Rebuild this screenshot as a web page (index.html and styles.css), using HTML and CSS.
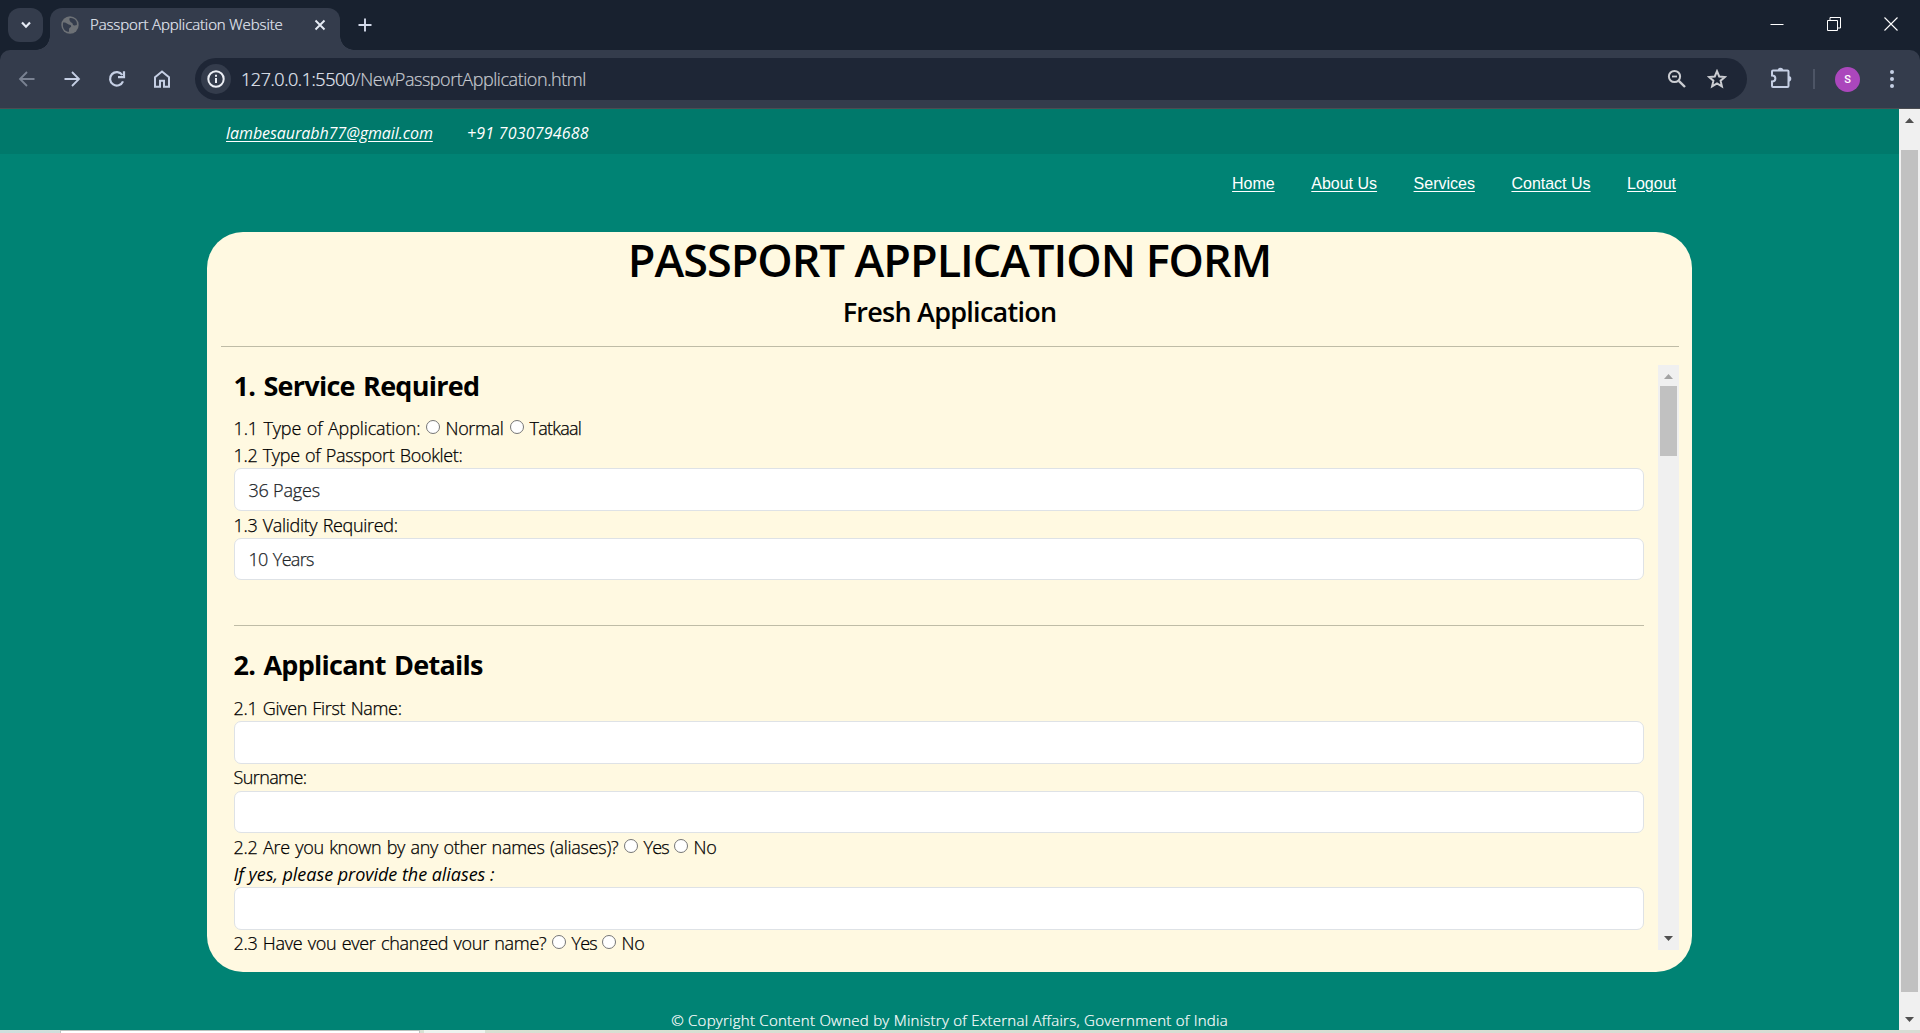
FILE: index.html
```
<!DOCTYPE html>
<html lang="en">
<head>
<meta charset="utf-8">
<title>Passport Application Website</title>
<link rel="stylesheet" href="styles.css">
</head>
<body>
<div class="browser">
  <div class="tabstrip">
    <button class="tab-search" aria-label="Search tabs"><svg width="12" height="12" viewBox="0 0 12 12"><path d="M2 3.5l4 4.2 4-4.2" fill="none" stroke="#e6ebf5" stroke-width="2.2"/></svg></button>
    <div class="tab">
      <svg class="globe" width="18" height="18" viewBox="0 0 18 18"><circle cx="9" cy="9" r="8.7" fill="#6d7176"/><path d="M2 6.500c2-.3 3.500.3 4.800 1.500 1 .9 3.400.6 3.400 2.300 0 1.400-2.200 1.200-2.200 2.800v2.700C4.500 15.800 2 13 1.900 9.500zM8.500 2.200c2.500-.6 5 .5 6.500 2.500 1 1.500 1 3 .8 4.300-1.500.2-2 .8-3.200.3-1.200-.6-.6-1.900-1.800-2.500C9.500 6.200 7.800 4 8.500 2.200z" fill="#343c4c"/></svg>
      <span class="tab-title">Passport Application Website</span>
      <svg class="tab-close" width="12" height="12" viewBox="0 0 12 12"><path d="M1.500 1.500l9 9m0-9l-9 9" stroke="#e6ebf5" stroke-width="1.900"/></svg>
    </div>
    <svg class="new-tab" width="14" height="14" viewBox="0 0 14 14"><path d="M7 .5v13M.5 7h13" stroke="#d3daea" stroke-width="1.900"/></svg>
    <div class="window-controls">
      <svg width="14" height="14" viewBox="0 0 14 14"><path d="M.5 7.500h13" stroke="#fff"/></svg>
      <svg width="14" height="14" viewBox="0 0 14 14"><path d="M.5 3.500h10v10H.5zM3 3V.5h10.500v10.500H11" fill="none" stroke="#fff"/></svg>
      <svg width="14" height="14" viewBox="0 0 14 14"><path d="M.5.5l13 13m0-13l-13 13" stroke="#fff" stroke-width="1.100"/></svg>
    </div>
  </div>
  <div class="toolbar">
    <div class="nav-icons">
      <svg width="18" height="18" viewBox="0 0 18 18"><path d="M16.500 9H2.500M9 2L2 9l7 7" fill="none" stroke="#7a8292" stroke-width="1.800"/></svg>
      <svg width="18" height="18" viewBox="0 0 18 18"><path d="M1.500 9h14M9 2l7 7-7 7" fill="none" stroke="#c5cfe4" stroke-width="1.800"/></svg>
      <svg width="18" height="18" viewBox="0 0 18 18"><path d="M15 11.300A6.700 6.700 0 1 1 14.300 5M16 1.200v6h-6" fill="none" stroke="#c5cfe4" stroke-width="2.200"/></svg>
      <svg width="18" height="18" viewBox="0 0 18 18"><path d="M2 7.200L9 1.500l7 5.700v9.500h-5v-6H7v6H2z" fill="none" stroke="#c5cfe4" stroke-width="2"/></svg>
    </div>
    <div class="omnibox">
      <span class="site-info"><svg width="18" height="18" viewBox="0 0 18 18"><circle cx="9" cy="9" r="7.700" fill="none" stroke="#eceff5" stroke-width="2"/><path d="M9 8v5M9 4.800v2" stroke="#eceff5" stroke-width="2"/></svg></span>
      <span class="url">127.0.0.1:5500<span class="path">/NewPassportApplication.html</span></span>
      <svg class="lens" width="20" height="20" viewBox="0 0 20 20"><circle cx="7.500" cy="7.500" r="5.600" fill="none" stroke="#cbcdd2" stroke-width="2"/><path d="M11.800 11.800l6.200 6.200" stroke="#cbcdd2" stroke-width="2.400"/><path d="M5 7.500h5" stroke="#cbcdd2" stroke-width="1.800"/></svg>
      <svg class="star" width="20" height="20" viewBox="0 0 20 20"><path d="M10 2.200l2.200 5.300 5.700.5-4.300 3.700 1.300 5.600-4.900-3-4.900 3 1.300-5.600L2.100 8l5.700-.5z" fill="none" stroke="#cbcdd2" stroke-width="2"/></svg>
    </div>
    <svg class="extensions" width="22" height="22" viewBox="0 0 22 22"><path d="M2 4.500q0-1 1-1h14.500q1 0 1 1v14.500q0 1-1 1H3q-1 0-1-1v-4.500c4.500 0 4.500-6 0-6z" fill="none" stroke="#c5cfe4" stroke-width="2"/><path d="M7.700 3.500a2.800 2.800 0 0 1 5.600 0zM18.500 9a2.800 2.800 0 0 1 0 5.600z" fill="#c5cfe4"/></svg>
    <span class="divider"></span>
    <span class="avatar">S</span>
    <svg class="menu" width="6" height="20" viewBox="0 0 6 20"><g fill="#c5cfe4"><circle cx="3" cy="3" r="2"/><circle cx="3" cy="10" r="2"/><circle cx="3" cy="17" r="2"/></g></svg>
  </div>

  <div class="viewport">
    <div class="page">
      <header class="topbar">
        <a class="email" href="#">lambesaurabh77@gmail.com</a>
        <span class="phone">+91 7030794688</span>
      </header>
      <nav class="links">
        <a href="#">Home</a><a href="#">About Us</a><a href="#">Services</a><a href="#">Contact Us</a><a href="#">Logout</a>
      </nav>
      <main class="card">
        <h1>PASSPORT APPLICATION FORM</h1>
        <h2>Fresh Application</h2>
        <hr>
        <div class="scroller">
          <form class="form">
            <h3>1. Service Required</h3>
            <div class="row"><span class="t1">1.1 Type of Application:</span><i class="radio"></i><span class="t-normal">Normal</span><i class="radio"></i><span class="t-tatkaal">Tatkaal</span></div>
            <label class="row">1.2 Type of Passport Booklet:</label>
            <div class="control">36 Pages</div>
            <label class="row">1.3 Validity Required:</label>
            <div class="control years">10 Years</div>
            <hr class="section-rule">
            <h3>2. Applicant Details</h3>
            <label class="row">2.1 Given First Name:</label>
            <div class="control"></div>
            <label class="row surname">Surname:</label>
            <div class="control"></div>
            <div class="row"><span class="t22">2.2 Are you known by any other names (aliases)?</span><i class="radio"></i><span class="t-yes">Yes</span><i class="radio"></i><span>No</span></div>
            <label class="row hint">If yes, please provide the aliases :</label>
            <div class="control"></div>
            <div class="row last"><span class="t23">2.3 Have you ever changed your name?</span><i class="radio"></i><span class="t-yes">Yes</span><i class="radio"></i><span>No</span></div>
          </form>
          <div class="scrollbar inner">
            <svg class="arrow-up" width="9" height="5" viewBox="0 0 9 5"><path d="M0 5L4.500 0 9 5z" fill="#a3a3a3"/></svg>
            <span class="thumb"></span>
            <svg class="arrow-down" width="9" height="5" viewBox="0 0 9 5"><path d="M0 0h9L4.500 5z" fill="#505050"/></svg>
          </div>
        </div>
      </main>
      <footer>© Copyright Content Owned by Ministry of External Affairs, Government of India</footer>
    </div>
    <div class="scrollbar outer">
      <svg class="arrow-up" width="9" height="5" viewBox="0 0 9 5"><path d="M0 5L4.500 0 9 5z" fill="#505050"/></svg>
      <span class="thumb"></span>
      <svg class="arrow-down" width="9" height="5" viewBox="0 0 9 5"><path d="M0 0h9L4.500 5z" fill="#505050"/></svg>
    </div>
  </div>
  <div class="taskbar"><span class="search-box"></span><span class="task-button"></span></div>
</div>
</body>
</html>
```
FILE: styles.css
```
* { box-sizing: border-box; }
body { margin: 0; font-family: "Open Sans", "Noto Sans", sans-serif; font-weight: 300; }
svg { display: block; flex: none; }

.browser { display: flex; flex-direction: column; width: 1920px; height: 1033px; overflow: hidden; background: #18212f; }

/* Tab strip */
.tabstrip { flex: none; display: flex; align-items: flex-start; height: 50px; padding: 8px 22px 0 8px; background: #18212f; }
.tab-search { display: flex; align-items: center; justify-content: center; width: 35px; height: 34px; padding: 0; border: 0; border-radius: 12px; background: #343c4c; }
.tab { position: relative; display: flex; align-items: center; width: 290px; height: 42px; margin-left: 7px; padding: 0 14px 8px 11px; border-radius: 12px 12px 0 0; background: #343c4c; }
.tab::before, .tab::after { content: ""; position: absolute; bottom: 0; width: 14px; height: 14px; }
.tab::before { left: -14px; background: radial-gradient(circle at 0 0, transparent 13.500px, #343c4c 14px); }
.tab::after { right: -14px; background: radial-gradient(circle at 100% 0, transparent 13.500px, #343c4c 14px); }
.tab-title { margin: -2px 0 0 11px; font-size: 15px; line-height: 20px; letter-spacing: -.12px; white-space: nowrap; color: #e6ebf5; -webkit-text-stroke: .2px; }
.tab-close { margin-left: auto; }
.new-tab { margin: 10px 0 0 18px; }
.window-controls { display: flex; gap: 43px; margin: 9px 0 0 auto; }

/* Toolbar */
.toolbar { flex: none; display: flex; align-items: center; height: 59px; padding: 0 25px 0 19px; border-bottom: 1px solid #4b4d52; border-radius: 10px 10px 0 0; background: #343c4c; }
.nav-icons { display: flex; gap: 27px; margin: 0 24px 0 -1px; }
.omnibox { display: flex; align-items: center; width: 1552px; height: 42px; padding: 0 20px 0 6px; border-radius: 21px; background: #1e2636; }
.site-info { display: flex; align-items: center; justify-content: center; width: 30px; height: 30px; border-radius: 50%; background: #343c4c; }
.url { margin: 0 0 0 10px; font-size: 18px; line-height: 26px; letter-spacing: -.45px; color: #e6ebf5; -webkit-text-stroke: .2px; }
.path { color: #c8cbd1; }
.lens { margin-left: auto; }
.star { margin-left: 20px; }
.extensions { margin: -2px 0 0 23px; }
.divider { width: 2px; height: 20px; margin-left: 21px; background: #4d5566; }
.avatar { width: 25px; height: 25px; margin-left: 20px; border-radius: 50%; background: #ab47bc; color: #fff; font: 500 11px/25px Roboto, sans-serif; text-align: center; }
.menu { margin-left: auto; }

/* Web page */
.viewport { flex: none; display: flex; height: 921px; }
.page { flex: 1; display: flex; flex-direction: column; align-items: center; overflow: hidden; background: #008374; }
.topbar { flex: none; display: flex; align-items: center; align-self: stretch; height: 45px; padding: 2px 0 0 226px; background: #00796b; color: #fff; font-size: 16px; font-style: italic; font-weight: 400; }
.email { width: 241px; color: #fff; text-underline-offset: 2px; letter-spacing: -.05px; }
.phone { letter-spacing: .2px; }
.links { flex: none; display: flex; align-self: stretch; justify-content: flex-end; gap: 36.500px; height: 78px; padding: 19px 223px 0 0; font: 16px/22px "Liberation Sans", Arial, sans-serif; }
.links a { color: #fff; text-underline-offset: 2px; }

.card { flex: none; width: 1485px; height: 740px; padding: 0 13.500px; border-radius: 36px; background: #fff9e1; color: #000; }
h1, h2, h3 { margin: 0; font-weight: 600; text-align: center; }
h1 { padding-top: 1px; font-size: 45px; line-height: 54px; letter-spacing: -1px; }
h2 { padding-top: 7px; font-size: 27px; line-height: 36px; letter-spacing: -.75px; }
hr { height: 1px; margin: 16px 0 18px; border: 0; background: #bfbca6; }
.scroller { display: flex; height: 585px; overflow: hidden; }
.form { flex: 1; padding: 5px 14px 0 13px; -webkit-text-stroke: .25px; }
h3 { font-size: 27px; font-weight: 700; line-height: 32px; letter-spacing: -.74px; word-spacing: 2px; text-align: left; margin-bottom: 12px; -webkit-text-stroke: 0; }
.row { display: flex; height: 27px; padding-top: 1px; font-size: 18px; line-height: 27px; letter-spacing: -.32px; word-spacing: 1px; white-space: nowrap; }
.surname { padding-top: 0; letter-spacing: -.6px; }
.last { padding-top: 0; }
.hint { font-style: italic; font-weight: 400; letter-spacing: -.04px; word-spacing: 0; -webkit-text-stroke: 0; }
.control { height: 42.500px; padding: 0 14px; border: 1px solid #dee2e6; border-radius: 7px; background: #fff; color: #212529; font-size: 18px; line-height: 42px; letter-spacing: -.2px; }
.years { line-height: 40px; letter-spacing: -.65px; word-spacing: 1px; }
.radio { flex: none; width: 14px; height: 14px; margin: 5px 6px 0 0; border: 1px solid #767676; border-radius: 50%; background: #fff; }
.t1 { width: 192px; letter-spacing: -.14px; }
.t-normal { width: 64px; letter-spacing: -.35px; }
.t-tatkaal { letter-spacing: -.75px; }
.t22 { width: 390px; letter-spacing: -.28px; }
.t23 { width: 318px; letter-spacing: -.29px; }
.t-yes { width: 30px; letter-spacing: -.85px; }
.section-rule { margin: 45px 0 23px; }
.section-rule + h3 { margin-bottom: 13px; }
footer { padding-top: 36px; font-size: 15px; line-height: 24px; letter-spacing: .26px; color: #fff; white-space: nowrap; -webkit-text-stroke: .2px; }

/* Scrollbars */
.scrollbar { flex: none; display: flex; flex-direction: column; align-items: center; width: 21px; background: #f0f0f0; }
.thumb { width: 17px; background: #c1c1c1; }
.arrow-down { margin-top: auto; }
.inner .arrow-up { margin: 9px 0 7px; }
.inner .thumb { height: 70px; }
.inner .arrow-down { margin-bottom: 9px; }
.outer .arrow-up { margin: 9px 0 27px; }
.outer .thumb { height: 842px; }
.outer .arrow-down { margin-bottom: 8px; }

.taskbar { flex: none; display: flex; height: 3px; background: linear-gradient(90deg, #cfdfdd, #d8e0d2 420px, #d8dcd4); }
.search-box { width: 360px; margin-left: 60px; border: 1px solid #b9c4c0; border-bottom: 0; background: #fff; }
.task-button { width: 61px; margin-left: 4px; background: #eef3ef; }
```
